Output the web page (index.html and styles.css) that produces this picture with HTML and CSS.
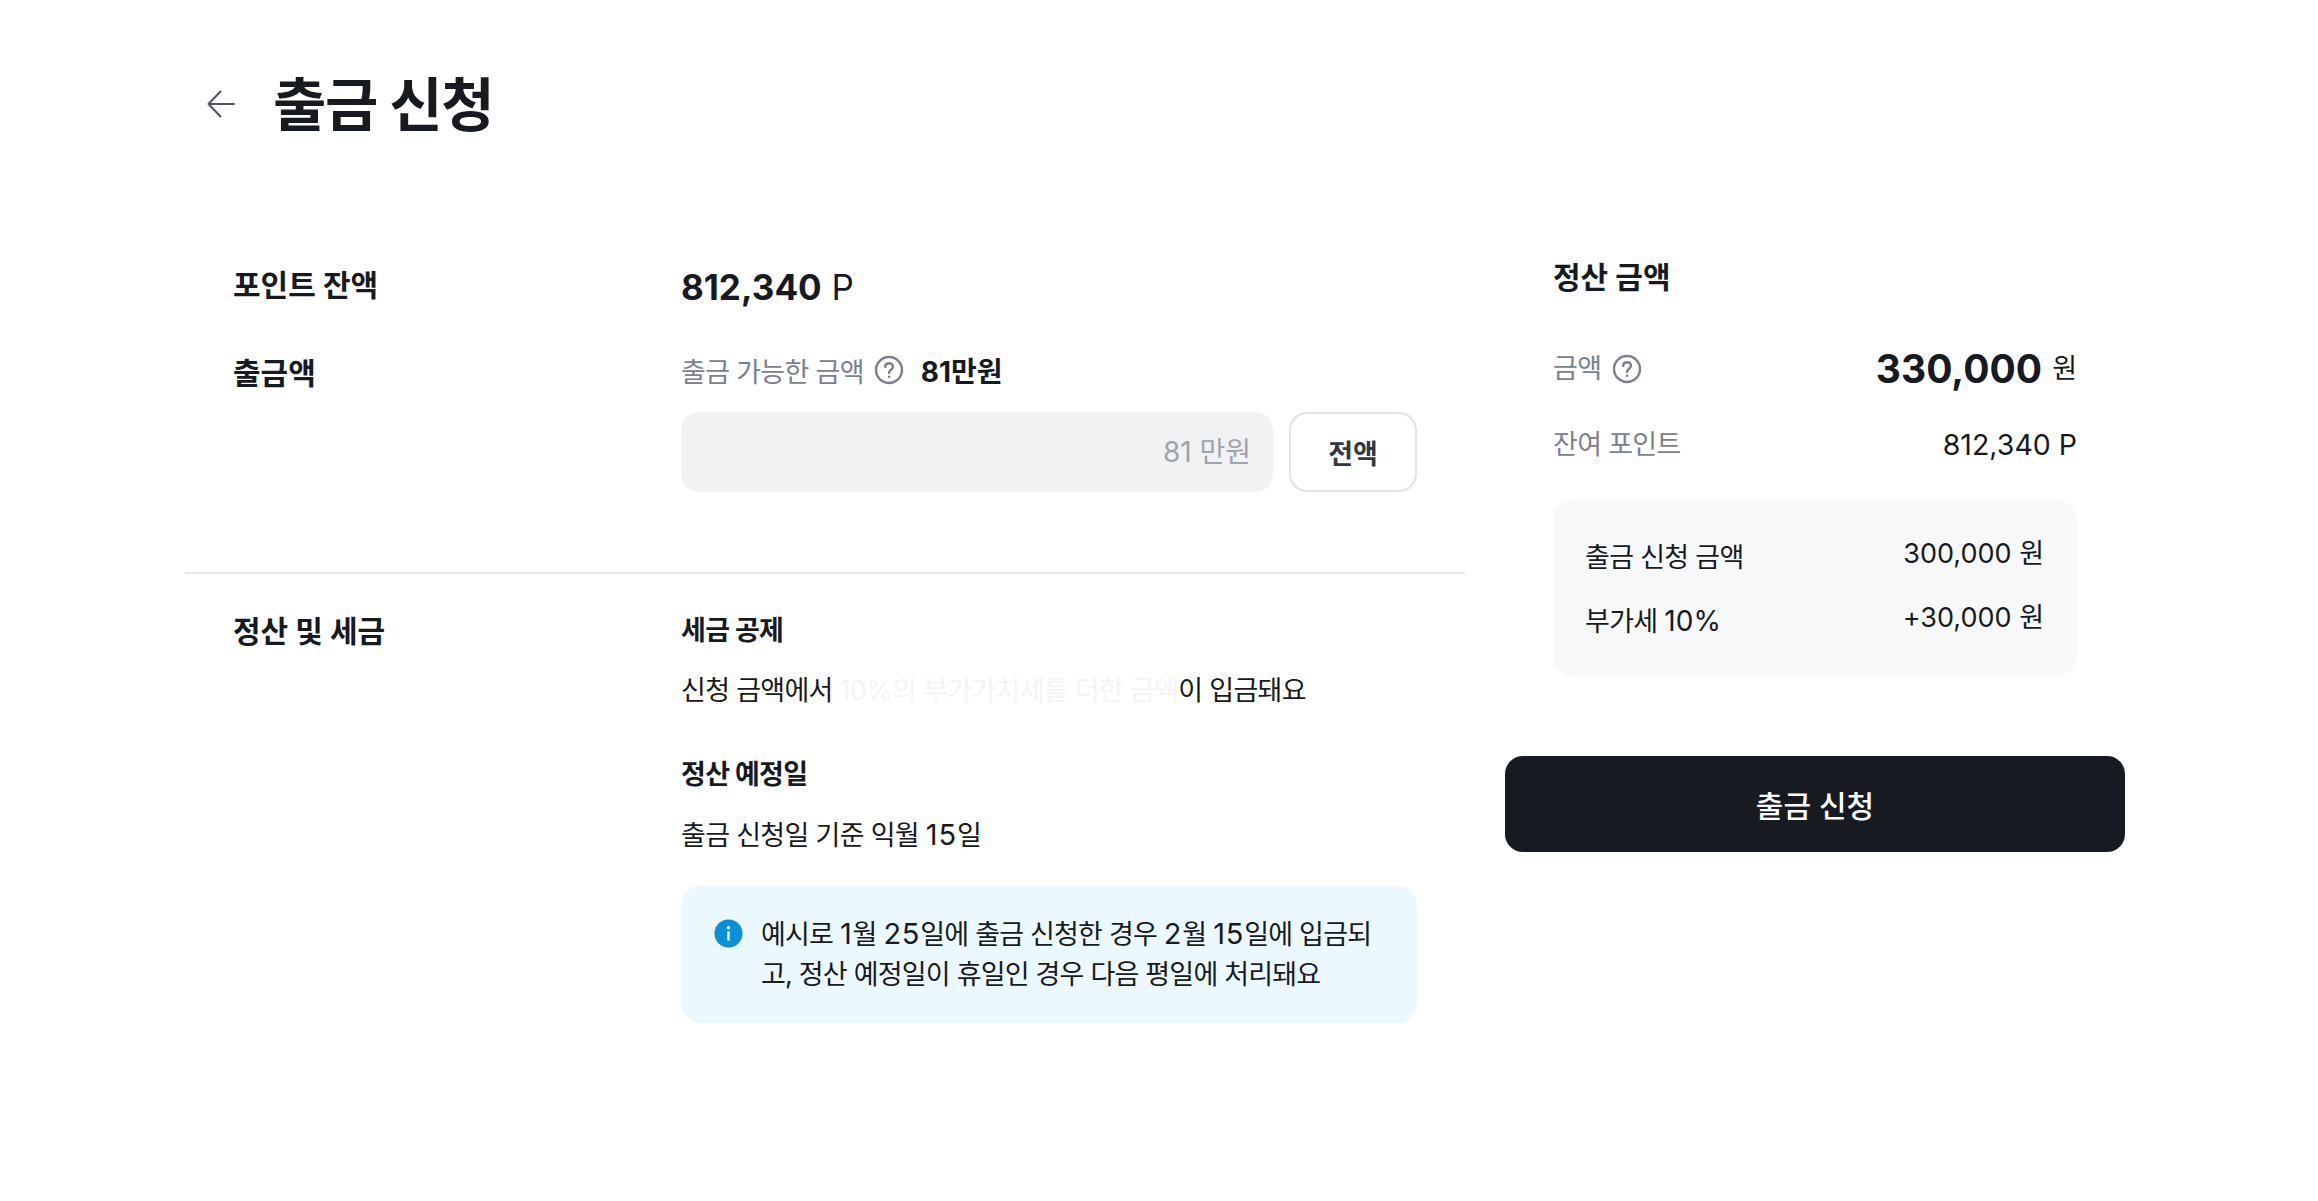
FILE: index.html
```html
<!DOCTYPE html>
<html lang="ko">
<head>
    <meta charset="UTF-8">
    <meta name="viewport" content="width=device-width, initial-scale=1.0">
    <title>출금 신청</title>
    <link rel="stylesheet" href="styles.css">
</head>
<body>
    <div class="page">
        <header class="page-header">
            <button class="back-btn" aria-label="뒤로">
                <svg width="28" height="28" viewBox="0 0 28 28" fill="none" stroke="#4e5562" stroke-width="2" stroke-linecap="round" stroke-linejoin="round">
                    <path d="M27 14H1.500M13.500 1.500L1.500 14L13.500 26.500"/>
                </svg>
            </button>
            <h1 class="page-title">출금 신청</h1>
        </header>

        <div class="columns">
            <main class="form-col">
                <section class="form-top">
                    <div class="row balance-row">
                        <h2 class="row-label">포인트 잔액</h2>
                        <div class="balance"><strong>812,340</strong> P</div>
                    </div>
                    <div class="row amount-row">
                        <h2 class="row-label">출금액</h2>
                        <div class="row-body">
                            <div class="available">
                                <span class="available-label">출금 가능한 금액</span>
                                <svg class="help-icon" width="30" height="30" viewBox="0 0 30 30" fill="none" stroke="#7b818c" stroke-width="2.400">
                                    <circle cx="15" cy="15" r="13"/>
                                    <path d="M11.200 12c0-2.300 1.700-3.800 3.900-3.800s3.800 1.500 3.800 3.500c0 3-3.800 3-3.800 6" stroke-linecap="round"/>
                                    <circle cx="15.100" cy="21.700" r="0.600" fill="#7b818c" stroke-width="1.400"/>
                                </svg>
                                <strong class="available-value">81만원</strong>
                            </div>
                            <div class="amount-input-row">
                                <div class="amount-input">81 만원</div>
                                <button class="all-btn">전액</button>
                            </div>
                        </div>
                    </div>
                </section>

                <section class="row tax-row">
                    <h2 class="row-label">정산 및 세금</h2>
                    <div class="row-body">
                        <h3 class="sub-title">세금 공제</h3>
                        <p class="sub-text">신청 금액에서 <span class="faint">10%의 부가가치세를 더한 금액</span>이 입금돼요</p>
                        <h3 class="sub-title sub-title-second">정산 예정일</h3>
                        <p class="sub-text">출금 신청일 기준 익월 <span class="num">15</span>일</p>
                        <div class="info-box">
                            <svg class="info-icon" width="29" height="29" viewBox="0 0 29 29">
                                <circle cx="14.500" cy="14.500" r="14" fill="#0891d8"/>
                                <rect x="13.300" y="12.500" width="2.400" height="9" fill="#fff"/>
                                <circle cx="14.500" cy="8.800" r="1.700" fill="#fff"/>
                            </svg>
                            <p>예시로 <span class="num">1</span>월 <span class="num">25</span>일에 출금 신청한 경우 <span class="num">2</span>월 <span class="num">15</span>일에 입금되<br>고, 정산 예정일이 휴일인 경우 다음 평일에 처리돼요</p>
                        </div>
                    </div>
                </section>
            </main>

            <aside class="summary-col">
                <div class="summary-inner">
                    <h2 class="summary-title">정산 금액</h2>
                    <div class="summary-line total-line">
                        <span class="muted with-icon">금액
                            <svg class="help-icon" width="30" height="30" viewBox="0 0 30 30" fill="none" stroke="#7b818c" stroke-width="2.400">
                                <circle cx="15" cy="15" r="13"/>
                                <path d="M11.200 12c0-2.300 1.700-3.800 3.900-3.800s3.800 1.500 3.800 3.500c0 3-3.800 3-3.800 6" stroke-linecap="round"/>
                                <circle cx="15.100" cy="21.700" r="0.600" fill="#7b818c" stroke-width="1.400"/>
                            </svg>
                        </span>
                        <span class="total"><strong>330,000</strong><span>원</span></span>
                    </div>
                    <div class="summary-line left-line">
                        <span class="muted">잔여 포인트</span>
                        <span class="value">812,340 P</span>
                    </div>
                    <div class="breakdown">
                        <div class="summary-line">
                            <span>출금 신청 금액</span>
                            <span class="value raised">300,000 원</span>
                        </div>
                        <div class="summary-line">
                            <span>부가세 <span class="num">10%</span></span>
                            <span class="value raised">+30,000 원</span>
                        </div>
                    </div>
                </div>
                <button class="submit-btn">출금 신청</button>
            </aside>
        </div>
    </div>
</body>
</html>
```

FILE: styles.css
```css
/* Reset and Base Styles */
* {
    margin: 0;
    padding: 0;
    box-sizing: border-box;
    font-family: Inter, 'Noto Sans CJK KR', sans-serif;
}

body {
    background-color: #fff;
    color: #171a21;
    font-size: 27px;
    letter-spacing: -0.7px;
}

button {
    background: none;
    border: none;
    cursor: pointer;
}

.num {
    font-size: 29px;
    letter-spacing: 0.8px;
}

.page {
    padding: 64px 0 0 185px;
}

/* Header */
.page-header {
    display: flex;
    align-items: center;
    height: 80px;
    padding: 2px 0 0 22px;
}

.back-btn {
    display: flex;
    margin: -2px 38px 0 0;
}

.page-title {
    font-size: 58px;
    font-weight: 700;
    line-height: 80px;
    letter-spacing: -1.400px;
}

/* Columns */
.columns {
    display: flex;
    gap: 40px;
    margin-top: 121px;
}

.form-col {
    width: 1280px;
}

.form-top {
    padding: 0 48px 80px;
    border-bottom: 2px solid #e5e8ec;
}

.row {
    display: flex;
}

.row-label {
    width: 448px;
    flex-shrink: 0;
    font-size: 30px;
    font-weight: 700;
    line-height: 40px;
    letter-spacing: 0;
}

.row-body {
    flex: 1;
}

.balance-row {
    height: 88px;
}

.balance {
    font-size: 35px;
    line-height: 45px;
    letter-spacing: 0;
}

.balance strong {
    font-weight: 700;
}

/* Amount */
.available {
    display: flex;
    align-items: center;
    height: 40px;
    margin-top: -3px;
}

.available-label,
.muted {
    color: #7b818c;
}

.available .help-icon {
    margin-left: 10px;
}

.available-value {
    margin-left: 17px;
    font-size: 28px;
    font-weight: 700;
    letter-spacing: 0;
}

.amount-input-row {
    display: flex;
    gap: 16px;
    margin-top: 22px;
}

.amount-input {
    flex: 1;
    height: 80px;
    padding: 0 22px;
    border-radius: 18px;
    background-color: #f1f2f4;
    color: #9fa4ad;
    font-size: 28px;
    line-height: 80px;
    letter-spacing: 0;
    text-align: right;
}

.all-btn {
    width: 128px;
    height: 80px;
    border: 2px solid #dfe2e7;
    border-radius: 18px;
    color: #323843;
    font-size: 27px;
    font-weight: 700;
}

/* Tax section */
.tax-row {
    padding: 37px 48px 0;
}

.sub-title {
    font-size: 27px;
    font-weight: 700;
    line-height: 40px;
}

.sub-title-second {
    margin-top: 44px;
}

.sub-text {
    margin-top: 20px;
    line-height: 40px;
}

.faint {
    color: #f3f4f6;
}

.info-box {
    display: flex;
    gap: 18px;
    margin-top: 30px;
    padding: 28px 32px 28px 33px;
    border-radius: 20px;
    background-color: #ebf8ff;
    line-height: 40px;
    letter-spacing: -0.8px;
}

.info-icon {
    flex-shrink: 0;
    margin-top: 5px;
}

/* Summary */
.summary-col {
    width: 620px;
}

.summary-inner {
    padding: 0 48px;
}

.summary-title {
    font-size: 30px;
    font-weight: 700;
    line-height: 40px;
    letter-spacing: 0;
    margin-top: -8px;
}

.summary-line {
    display: flex;
    justify-content: space-between;
    align-items: center;
    line-height: 40px;
}

.with-icon {
    display: flex;
    align-items: center;
    gap: 11px;
}

.total-line {
    margin-top: 52px;
}

.total {
    display: flex;
    align-items: center;
    gap: 10px;
    letter-spacing: 0;
}

.total strong {
    font-size: 39px;
    font-weight: 700;
}

.left-line {
    margin-top: 36px;
}

.value {
    font-size: 28.500px;
    letter-spacing: 0;
}

.raised {
    margin: 0 1px 7px 0;
    font-size: 27px;
}

.breakdown {
    display: flex;
    flex-direction: column;
    gap: 17px;
    margin-top: 35px;
    padding: 34px 32px 31px;
    border-radius: 20px;
    background-color: #f7f8fa;
}

.breakdown .num {
    font-size: 28px;
    letter-spacing: 0;
}

.submit-btn {
    display: block;
    width: 100%;
    height: 96px;
    margin-top: 80px;
    border-radius: 18px;
    background-color: #171a21;
    color: #fff;
    font-size: 30px;
    font-weight: 500;
    letter-spacing: 0;
}
```
